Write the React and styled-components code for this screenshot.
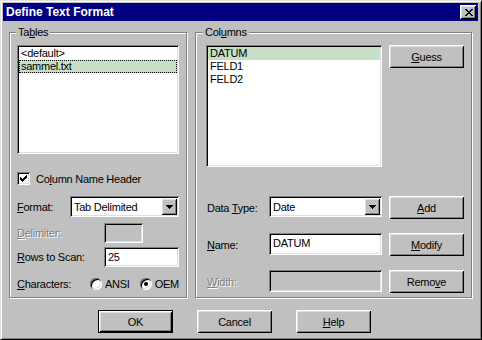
import React from "react";
import styled, { createGlobalStyle, css } from "styled-components";

const GlobalStyle = createGlobalStyle`
  html, body {
    margin: 0;
    padding: 0;
    background: #c0c0c0;
  }
  body {
    font-family: "Liberation Sans", Arial, sans-serif;
    font-size: 11px;
    letter-spacing: -0.25px;
    color: #000;
  }
`;

const sunken = css`
  box-shadow: inset 1px 1px #808080, inset -1px -1px #fff, inset 2px 2px #000,
    inset -2px -2px #dfdfdf;
`;

const raised = css`
  box-shadow: inset 1px 1px #fff, inset -1px -1px #000, inset 2px 2px #dfdfdf,
    inset -2px -2px #808080;
`;

const Window = styled.div`
  width: 482px;
  height: 340px;
  box-sizing: border-box;
  background: #c0c0c0;
  border: 1px solid;
  border-color: #dfdfdf #000 #000 #dfdfdf;
  box-shadow: inset 1px 1px #fff, inset -1px -1px #808080;
  padding: 2px 3px 2px 2px;
  display: flex;
  flex-direction: column;
`;

const TitleBar = styled.div`
  height: 18px;
  flex-shrink: 0;
  background: #000080;
  color: #fff;
  font-weight: bold;
  font-size: 12px;
  letter-spacing: 0;
  display: flex;
  align-items: center;
  justify-content: space-between;
  padding: 0 2px 0 3px;
`;

const CloseButton = styled.div`
  width: 16px;
  height: 14px;
  background: #c0c0c0;
  ${raised};
  display: flex;
  align-items: center;
  justify-content: center;
  padding-left: 1px;
  box-sizing: border-box;
`;

const Body = styled.div`
  display: flex;
  flex-direction: column;
  padding-left: 6px;
`;

const GroupRow = styled.div`
  display: flex;
  gap: 8px;
  margin-top: 11px;
`;

const GroupBox = styled.div`
  width: ${(p) => p.$width}px;
  height: 266px;
  box-sizing: border-box;
  border: 1px solid #808080;
  box-shadow: inset 1px 1px #fff, 1px 1px #fff;
  padding-left: ${(p) => p.$pad}px;
  display: flex;
  flex-direction: column;
`;

const Legend = styled.div`
  align-self: flex-start;
  height: 13px;
  line-height: 13px;
  margin: -7px 0 0 ${(p) => p.$shift}px;
  padding: 0 2px;
  background: #c0c0c0;
`;

const U = styled.span`
  text-decoration: underline;
`;

const ListBox = styled.div`
  width: ${(p) => p.$width}px;
  height: ${(p) => p.$height}px;
  margin-top: ${(p) => p.$top || 0}px;
  box-sizing: border-box;
  background: #fff;
  ${sunken};
  padding: 2px;
  overflow: hidden;
`;

const ColumnList = styled(ListBox)`
  grid-column: 1 / 3;
`;

const ListItem = styled.div`
  height: 13px;
  line-height: 13px;
  padding-left: 2px;
  white-space: nowrap;
  background: ${(p) => (p.$selected ? "#c6dfc6" : "transparent")};
  outline: ${(p) => (p.$focused ? "1px dotted #000" : "none")};
  outline-offset: -1px;
`;

const CheckRow = styled.div`
  display: flex;
  align-items: center;
  gap: 6px;
  height: 13px;
  margin-top: 18px;
`;

const Box = styled.div`
  width: 13px;
  height: 13px;
  flex-shrink: 0;
  background: #fff;
  ${sunken};
  display: flex;
  align-items: center;
  justify-content: center;
`;

const FieldRow = styled.div`
  display: flex;
  align-items: center;
  height: ${(p) => p.$height}px;
  margin-top: ${(p) => p.$top}px;
`;

const Label = styled.div`
  width: ${(p) => (p.$width ? p.$width + "px" : "auto")};
  flex-shrink: 0;
  white-space: nowrap;
  ${(p) =>
    p.$disabled &&
    css`
      color: #808080;
      text-shadow: 1px 1px 0 #fff;
    `}
`;

const Combo = styled.div`
  width: ${(p) => p.$width}px;
  height: 21px;
  box-sizing: border-box;
  background: #fff;
  ${sunken};
  padding: 2px;
  display: flex;
  align-items: center;
`;

const ComboText = styled.div`
  flex: 1;
  padding-left: 2px;
  white-space: nowrap;
`;

const DropButton = styled.div`
  width: 16px;
  height: 17px;
  background: #c0c0c0;
  ${raised};
  display: flex;
  align-items: center;
  justify-content: center;
`;

const TextField = styled.div`
  width: ${(p) => p.$width}px;
  height: ${(p) => p.$height}px;
  box-sizing: border-box;
  background: ${(p) => (p.$disabled ? "#c0c0c0" : "#fff")};
  ${sunken};
  padding: 4px 4px 0;
  line-height: 13px;
  white-space: nowrap;
`;

const RadioGroup = styled.div`
  display: flex;
  align-items: center;
  gap: 10px;
`;

const RadioOption = styled.div`
  display: flex;
  align-items: center;
  gap: 3px;
`;

const RadioCircle = styled.div`
  width: 12px;
  height: 12px;
  border-radius: 50%;
  background: #fff;
  box-shadow: inset 1px 1px #808080, inset -1px -1px #fff, inset 2px 2px #000,
    inset -2px -2px #dfdfdf;
  display: flex;
  align-items: center;
  justify-content: center;
`;

const RadioDot = styled.div`
  width: 4px;
  height: 4px;
  border-radius: 50%;
  background: #000;
`;

const ColumnsGrid = styled.div`
  display: grid;
  grid-template-columns: 63px 113px 82px;
  grid-template-rows: 137px repeat(3, 23px);
  row-gap: 14px;
  margin-top: 6px;
  align-items: start;
`;

const GridLabel = styled(Label)`
  padding-left: 1px;
  align-self: center;
`;

const Button = styled.button`
  width: 75px;
  height: 23px;
  padding: 0;
  margin: 0;
  font-family: inherit;
  font-size: 11px;
  letter-spacing: inherit;
  color: #000;
  background: #c0c0c0;
  box-sizing: border-box;
  border: ${(p) => (p.$default ? "1px solid #000" : "none")};
  ${raised};
`;

const SideButton = styled(Button)`
  justify-self: end;
`;

const ButtonRow = styled.div`
  display: flex;
  gap: 24px;
  margin-top: 12px;
  padding-left: 89px;
`;

const Pixels = ({ rows }) => (
  <svg width={rows[0].length} height={rows.length} shapeRendering="crispEdges">
    {rows.flatMap((r, y) =>
      r.split("").map((c, x) =>
        c === "#" ? <rect key={x + "-" + y} x={x} y={y} width="1" height="1" fill="#000" /> : null
      )
    )}
  </svg>
);

const CLOSE = [
  "##....##",
  ".##..##.",
  "..####..",
  "...##...",
  "..####..",
  ".##..##.",
  "##....##",
];

const CHECK = [
  "......#",
  ".....##",
  "#...###",
  "##.###.",
  "#####..",
  ".###...",
  "..#....",
];

const ARROW = ["#######", ".#####.", "..###..", "...#..."];

const Dropdown = ({ width, children }) => (
  <Combo $width={width}>
    <ComboText>{children}</ComboText>
    <DropButton>
      <Pixels rows={ARROW} />
    </DropButton>
  </Combo>
);

const Radio = ({ checked, children }) => (
  <RadioOption>
    <RadioCircle>{checked && <RadioDot />}</RadioCircle>
    <span>{children}</span>
  </RadioOption>
);

export default function App() {
  return (
    <>
      <GlobalStyle />
      <Window>
        <TitleBar>
          <span>Define Text Format</span>
          <CloseButton>
            <Pixels rows={CLOSE} />
          </CloseButton>
        </TitleBar>
        <Body>
          <GroupRow>
            <GroupBox $width={178} $pad={7}>
              <Legend $shift={-1}>
                Ta<U>b</U>les
              </Legend>
              <ListBox $width={162} $height={109} $top={6}>
                <ListItem>&lt;default&gt;</ListItem>
                <ListItem $selected $focused>
                  sammel.txt
                </ListItem>
              </ListBox>
              <CheckRow>
                <Box>
                  <Pixels rows={CHECK} />
                </Box>
                <span>
                  Co<U>l</U>umn Name Header
                </span>
              </CheckRow>
              <FieldRow $height={21} $top={11}>
                <Label $width={53}>
                  <U>F</U>ormat:
                </Label>
                <Dropdown width={109}>Tab Delimited</Dropdown>
              </FieldRow>
              <FieldRow $height={20} $top={6}>
                <Label $width={87} $disabled>
                  <U>D</U>elimiter:
                </Label>
                <TextField $width={39} $height={20} $disabled />
              </FieldRow>
              <FieldRow $height={20} $top={4}>
                <Label $width={87}>
                  <U>R</U>ows to Scan:
                </Label>
                <TextField $width={75} $height={20}>
                  25
                </TextField>
              </FieldRow>
              <FieldRow $height={13} $top={10}>
                <Label $width={73}>
                  <U>C</U>haracters:
                </Label>
                <RadioGroup>
                  <Radio>ANSI</Radio>
                  <Radio checked>OEM</Radio>
                </RadioGroup>
              </FieldRow>
            </GroupBox>
            <GroupBox $width={277} $pad={10}>
              <Legend $shift={-3}>
                Col<U>u</U>mns
              </Legend>
              <ColumnsGrid>
                <ColumnList $width={176} $height={122}>
                  <ListItem $selected>DATUM</ListItem>
                  <ListItem>FELD1</ListItem>
                  <ListItem>FELD2</ListItem>
                </ColumnList>
                <SideButton>
                  <U>G</U>uess
                </SideButton>
                <GridLabel>
                  Data <U>T</U>ype:
                </GridLabel>
                <Dropdown width={113}>Date</Dropdown>
                <SideButton>
                  <U>A</U>dd
                </SideButton>
                <GridLabel>
                  <U>N</U>ame:
                </GridLabel>
                <TextField $width={113} $height={22}>
                  DATUM
                </TextField>
                <SideButton>
                  <U>M</U>odify
                </SideButton>
                <GridLabel $disabled>
                  <U>W</U>idth:
                </GridLabel>
                <TextField $width={113} $height={22} $disabled />
                <SideButton>
                  Remo<U>v</U>e
                </SideButton>
              </ColumnsGrid>
            </GroupBox>
          </GroupRow>
          <ButtonRow>
            <Button $default>OK</Button>
            <Button>Cancel</Button>
            <Button>
              <U>H</U>elp
            </Button>
          </ButtonRow>
        </Body>
      </Window>
    </>
  );
}
